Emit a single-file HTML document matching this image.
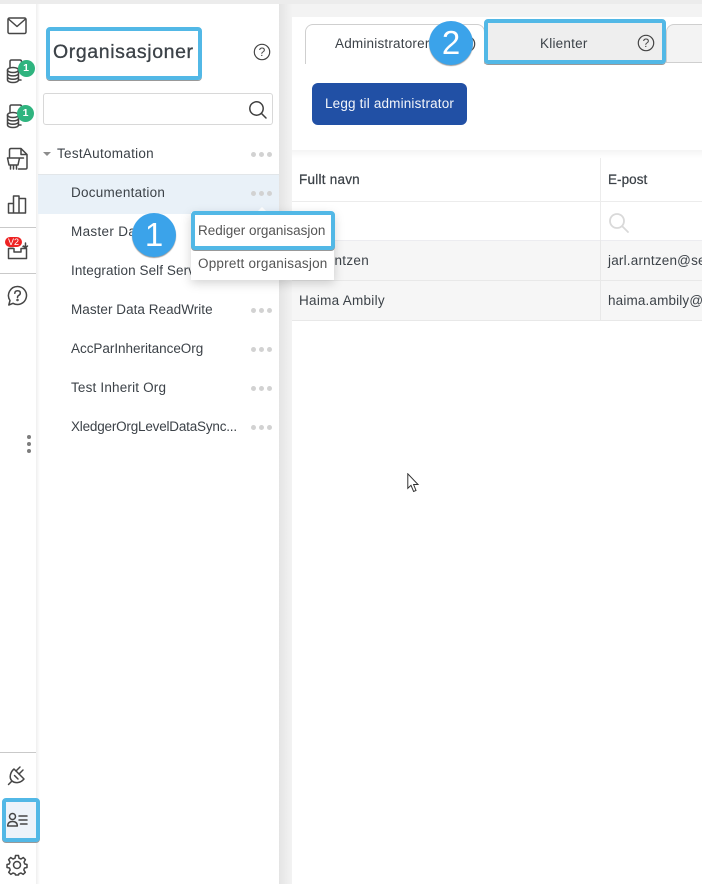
<!DOCTYPE html>
<html><head><meta charset="utf-8">
<style>
html,body{margin:0;padding:0;background:#f3f3f3}
#p{position:relative;width:702px;height:884px;overflow:hidden;background:#f3f3f3;font-family:"Liberation Sans",sans-serif;color:#3c4248}
#p div,#p svg,#p span{position:absolute}
.t{font-size:13.5px;line-height:18px;white-space:nowrap;letter-spacing:.32px}
.dots{width:21px;height:5px}
.dots i{position:absolute;width:5px;height:5px;border-radius:50%;background:#d2d2d2;top:0}
.dots i:nth-child(1){left:0}.dots i:nth-child(2){left:8px}.dots i:nth-child(3){left:16px}
.hl{border:4px solid #52b8e6;box-shadow:0 1px 0 #999;border-radius:4px;box-sizing:border-box}
.num{width:44px;height:44px;border-radius:50%;background:#3ba3ea;color:#fff;font-size:33px;line-height:44px;text-align:center;box-shadow:0 1px 1px #999}
.ic{fill:none;stroke:#464646;stroke-width:1.5;stroke-linecap:round;stroke-linejoin:round}
.badge{width:17px;height:17px;border-radius:50%;background:#2fb47f;color:#fff;font-size:10.5px;font-weight:bold;line-height:17px;text-align:center}
</style></head><body><div id="p">

<!-- top strip -->
<div style="left:0;top:0;width:702px;height:4px;background:#ececec"></div>

<!-- left rail -->
<div style="left:0;top:4px;width:36px;height:880px;background:#fff"></div>

<svg class="ic" style="left:7px;top:17px" width="20" height="18" viewBox="0 0 20 18"><rect x="1" y="1" width="18" height="15.5" rx="1.5"/><path d="M1.5 2 10 9.5 18.500 2"/></svg>

<svg class="ic" style="left:6px;top:58px" width="22" height="26" viewBox="0 0 22 26"><path d="M4 9V3.500Q4 2 5.500 2H14Q15.500 2 15.500 3.500V7M15 22H12.500"/><ellipse cx="7" cy="12" rx="5.500" ry="2.500"/><path d="M1.500 12v10c0 1.400 2.500 2.500 5.500 2.500s5.500-1.100 5.500-2.500V12M1.500 15.400c0 1.400 2.500 2.500 5.500 2.500s5.500-1.100 5.500-2.500M1.500 18.800c0 1.400 2.500 2.500 5.500 2.500s5.500-1.100 5.500-2.500"/></svg>
<div class="badge" style="left:17.5px;top:60px">1</div>

<svg class="ic" style="left:6px;top:103px" width="22" height="26" viewBox="0 0 22 26"><path d="M4 9V3.500Q4 2 5.500 2H14Q15.500 2 15.500 3.500V7M15 22H12.500"/><ellipse cx="7" cy="12" rx="5.500" ry="2.500"/><path d="M1.500 12v10c0 1.400 2.500 2.500 5.500 2.500s5.500-1.100 5.500-2.500V12M1.500 15.400c0 1.400 2.500 2.500 5.500 2.500s5.500-1.100 5.500-2.500M1.500 18.800c0 1.400 2.500 2.500 5.500 2.500s5.500-1.100 5.500-2.500"/></svg>
<div class="badge" style="left:17px;top:105px">1</div>

<svg class="ic" style="left:6px;top:147px" width="22" height="25" viewBox="0 0 22 25"><path d="M3.500 10V3Q3.500 1.500 5 1.500H15L21 7.500V20.500Q21 22 19.500 22H12.500M15 1.500V7.500H21"/><path d="M1.500 11H13.500L12 18H3ZM13.500 11H17.500M4.500 18V22M7.500 18V22M10.500 18V22"/></svg>

<svg class="ic" style="left:7px;top:193px" width="20" height="22" viewBox="0 0 20 22"><path d="M1.500 20V10.500H6.500V20ZM6.500 20V3H12V20ZM12 20V5.500H18.500V20Z"/></svg>

<div style="left:0;top:227px;width:36px;height:1px;background:#c9c9c9"></div>

<svg class="ic" style="left:7px;top:238px" width="22" height="24" viewBox="0 0 22 24"><path d="M1.500 10.500V20.500H19.500V10.500H14V14H7V10.500ZM3 8.500H6M16 8.500H19"/><path d="M18.500 5V9.500M16.500 8L18.500 10 20.500 8"/></svg>
<div style="left:5px;top:237px;width:17px;height:10px;border-radius:6px;background:#ee2222;color:#fff;font-size:9px;line-height:10px;text-align:center">V2</div>

<div style="left:0;top:273px;width:36px;height:1px;background:#c9c9c9"></div>

<svg class="ic" style="left:7px;top:285px" width="21" height="22" viewBox="0 0 21 22"><path d="M10.500 1.500A9 9 0 1 1 6 18.300L1.800 20 3 15.500A9 9 0 0 1 10.500 1.500Z"/><path d="M7.800 8.300Q8 5.800 10.600 5.800 13.300 5.800 13.300 8.100 13.300 9.600 11.700 10.400 10.500 11 10.500 12.500"/><circle cx="10.500" cy="15" r=".5"/></svg>

<div style="left:27px;top:435px;width:4px;height:4px;border-radius:50%;background:#7d7d7d"></div>
<div style="left:27px;top:442px;width:4px;height:4px;border-radius:50%;background:#7d7d7d"></div>
<div style="left:27px;top:449px;width:4px;height:4px;border-radius:50%;background:#7d7d7d"></div>

<div style="left:0;top:752px;width:36px;height:1px;background:#c9c9c9"></div>

<svg class="ic" style="left:7px;top:764px" width="21" height="22" viewBox="0 0 21 22"><path d="M1.500 20.500L5 17"/><path d="M7 5L17 15Q14.500 18 11 18.500 7.500 19 5 17 2.500 14.500 3.500 10.500 4.500 7 7 5Z"/><path d="M12 10L16 6M9 7L13 3M7.500 11.500L11 15"/></svg>

<svg class="ic" style="left:6px;top:854px" width="22" height="22" viewBox="0 0 22 22"><circle cx="11" cy="11" r="3.500"/><path d="M9.500 1.500H12.500L13 4.200 15 5 17.300 3.500 19.400 5.700 18 8 18.800 10 21 10.500V13.500L18.500 14 17.800 16 19.300 18.300 17.200 20.400 15 19 13 19.700 12.500 21H9.500L9 19.700 7 19 4.800 20.400 2.700 18.300 4.200 16 3.500 14 1 13.500V10.500L3.200 10 4 8 2.600 5.700 4.700 3.500 7 5 9 4.200Z"/></svg>

<!-- org panel -->
<div style="left:36px;top:4px;width:243px;height:880px;background:linear-gradient(90deg,#efefef,#fff 4px)"></div>
<div style="left:279px;top:4px;width:13px;height:880px;background:linear-gradient(90deg,#e4e4e4,#f3f3f3)"></div>

<!-- selected rail item (overlaps panel edge) -->
<div class="hl" style="left:2px;top:798px;width:38px;height:44px;background:#edf3fa"></div>
<svg class="ic" style="left:7px;top:810px" width="21" height="18" viewBox="0 0 21 18"><circle cx="5.500" cy="6.500" r="3"/><path d="M.7 16Q.7 11.500 5.500 11.500 10.300 11.500 10.300 16Z"/><path d="M12 6H20M12 10H20M13.500 14H20"/></svg>

<div class="hl" style="left:46px;top:27px;width:156px;height:53px"></div>
<div style="left:53px;top:39px;font-size:19.500px;line-height:26px;letter-spacing:.6px;color:#3c4248;-webkit-text-stroke:.3px #3c4248;white-space:nowrap">Organisasjoner</div>

<svg style="left:253px;top:43px" width="18" height="18" viewBox="0 0 18 18"><circle cx="9" cy="9" r="7.700" fill="none" stroke="#444" stroke-width="1.200"/><text x="9" y="13.200" font-size="12" font-family="Liberation Sans" text-anchor="middle" fill="#444">?</text></svg>

<div style="left:43px;top:93px;width:230px;height:32px;box-sizing:border-box;border:1px solid #d8d8d8;border-radius:3px;background:#fff"></div>
<svg style="left:248px;top:100px" width="20" height="20" viewBox="0 0 20 20" fill="none" stroke="#3f3f3f" stroke-width="1.500" stroke-linecap="round"><circle cx="8.500" cy="8.500" r="6.700"/><path d="M13.500 13.500L18 18"/></svg>

<div style="left:43px;top:152px;width:0;height:0;border-left:4px solid transparent;border-right:4px solid transparent;border-top:4px solid #8d8d8d"></div>
<div class="t" style="left:57px;top:145px;letter-spacing:.28px">TestAutomation</div>
<div class="dots" style="left:251px;top:152px"><i></i><i></i><i></i></div>

<div style="left:38px;top:174px;width:241px;height:40px;background:#e9f1f8;border-top:1px solid #e2e6e9;box-sizing:border-box"></div>
<div class="t" style="left:71px;top:184px;letter-spacing:.26px">Documentation</div>
<div class="dots" style="left:251px;top:191px"><i></i><i></i><i></i></div>
<div class="t" style="left:71px;top:223px">Master Data</div>
<div class="t" style="left:71px;top:262px;letter-spacing:.08px">Integration Self Service</div>
<div class="t" style="left:71px;top:301px;letter-spacing:.04px">Master Data ReadWrite</div>
<div class="dots" style="left:251px;top:308px"><i></i><i></i><i></i></div>
<div class="t" style="left:71px;top:340px;letter-spacing:-.03px">AccParInheritanceOrg</div>
<div class="dots" style="left:251px;top:347px"><i></i><i></i><i></i></div>
<div class="t" style="left:71px;top:379px;letter-spacing:.18px">Test Inherit Org</div>
<div class="dots" style="left:251px;top:386px"><i></i><i></i><i></i></div>
<div class="t" style="left:71px;top:418px;letter-spacing:-.2px">XledgerOrgLevelDataSync...</div>
<div class="dots" style="left:251px;top:425px"><i></i><i></i><i></i></div>

<!-- main -->
<div style="left:292px;top:17px;width:410px;height:867px;background:#fff"></div>

<!-- tabs -->
<div style="left:305px;top:24px;width:180px;height:40px;box-sizing:border-box;border:1px solid #cfcfcf;border-bottom:none;border-radius:8px 8px 0 0;background:#fff"></div>
<div class="t" style="left:335px;top:35px;letter-spacing:.2px">Administratorer</div>
<svg style="left:458px;top:35px" width="18" height="18" viewBox="0 0 18 18"><circle cx="9" cy="9" r="7.700" fill="none" stroke="#444" stroke-width="1.200"/></svg>

<div style="left:666px;top:24px;width:50px;height:39px;box-sizing:border-box;border:1px solid #cfcfcf;border-radius:8px 8px 0 0;background:#f3f3f3"></div>

<div style="left:485px;top:20px;width:181px;height:44px;background:#eee;border-radius:3px"></div>
<div class="hl" style="left:484px;top:19px;width:182px;height:45px"></div>
<div class="t" style="left:540px;top:35px;letter-spacing:.22px">Klienter</div>
<svg style="left:637px;top:34px" width="18" height="18" viewBox="0 0 18 18"><circle cx="9" cy="9" r="7.700" fill="none" stroke="#444" stroke-width="1.200"/><text x="9" y="13.200" font-size="12" font-family="Liberation Sans" text-anchor="middle" fill="#444">?</text></svg>

<div class="num" style="left:429px;top:21px">2</div>

<div style="left:312px;top:83px;width:155px;height:42px;border-radius:6px;background:#2150a5"></div>
<div class="t" style="left:325px;top:94.500px;color:#f2f5fa;letter-spacing:.17px">Legg til administrator</div>

<!-- table -->
<div style="left:292px;top:150px;width:410px;height:8px;background:linear-gradient(#f4f4f4,#fff)"></div>
<div style="left:292px;top:201px;width:410px;height:1px;background:#ececec"></div>
<div style="left:600px;top:158px;width:1px;height:162px;background:#ececec"></div>
<div style="left:292px;top:240px;width:410px;height:81px;background:#f6f6f6"></div>
<div style="left:292px;top:240px;width:410px;height:1px;background:#ececf0"></div>
<div style="left:292px;top:280px;width:410px;height:1px;background:#e8e8e8"></div>
<div style="left:292px;top:320px;width:410px;height:1px;background:#e8e8e8"></div>
<div style="left:600px;top:240px;width:1px;height:81px;background:#e8e8e8"></div>

<div class="t" style="left:299px;top:171px;-webkit-text-stroke:.25px #3c4248;letter-spacing:.24px">Fullt navn</div>
<div class="t" style="left:608px;top:171px;-webkit-text-stroke:.25px #3c4248;letter-spacing:.05px">E-post</div>
<svg style="left:608px;top:212px" width="22" height="22" viewBox="0 0 22 22" fill="none" stroke="#d9d9d9" stroke-width="1.800" stroke-linecap="round"><circle cx="9" cy="9" r="7"/><path d="M14.500 14.500L20 20"/></svg>
<div class="t" style="left:299px;top:252px;width:70px;text-align:right;overflow:hidden;letter-spacing:.3px;direction:rtl">Arntzen</div>
<div class="t" style="left:608px;top:252px;letter-spacing:.2px">jarl.arntzen@se</div>
<div class="t" style="left:299px;top:292px;letter-spacing:.28px">Haima Ambily</div>
<div class="t" style="left:608px;top:292px;letter-spacing:.15px">haima.ambily@s</div>

<!-- popup -->
<div style="left:257px;top:207px;width:0;height:0;border-left:5px solid transparent;border-right:5px solid transparent;border-bottom:5px solid #fff"></div>
<div style="left:191px;top:212px;width:143px;height:68px;background:#fff;box-shadow:0 3px 10px rgba(0,0,0,.18)"></div>
<div class="hl" style="left:191px;top:211px;width:144px;height:39px;background:#fff"></div>
<div class="t" style="left:198px;top:221.500px;color:#555;letter-spacing:-.01px">Rediger organisasjon</div>
<div class="t" style="left:198px;top:254.500px;color:#555;letter-spacing:.21px">Opprett organisasjon</div>

<div class="num" style="left:132px;top:213px">1</div>

<!-- cursor -->
<svg style="left:407px;top:473px" width="13" height="20" viewBox="0 0 13 20"><path d="M.8.8V15.300L4 12.300 6.600 18.500 9 17.500 6.600 11.500H11Z" fill="#fff" stroke="#333" stroke-width="1"/></svg>

</div></body></html>
